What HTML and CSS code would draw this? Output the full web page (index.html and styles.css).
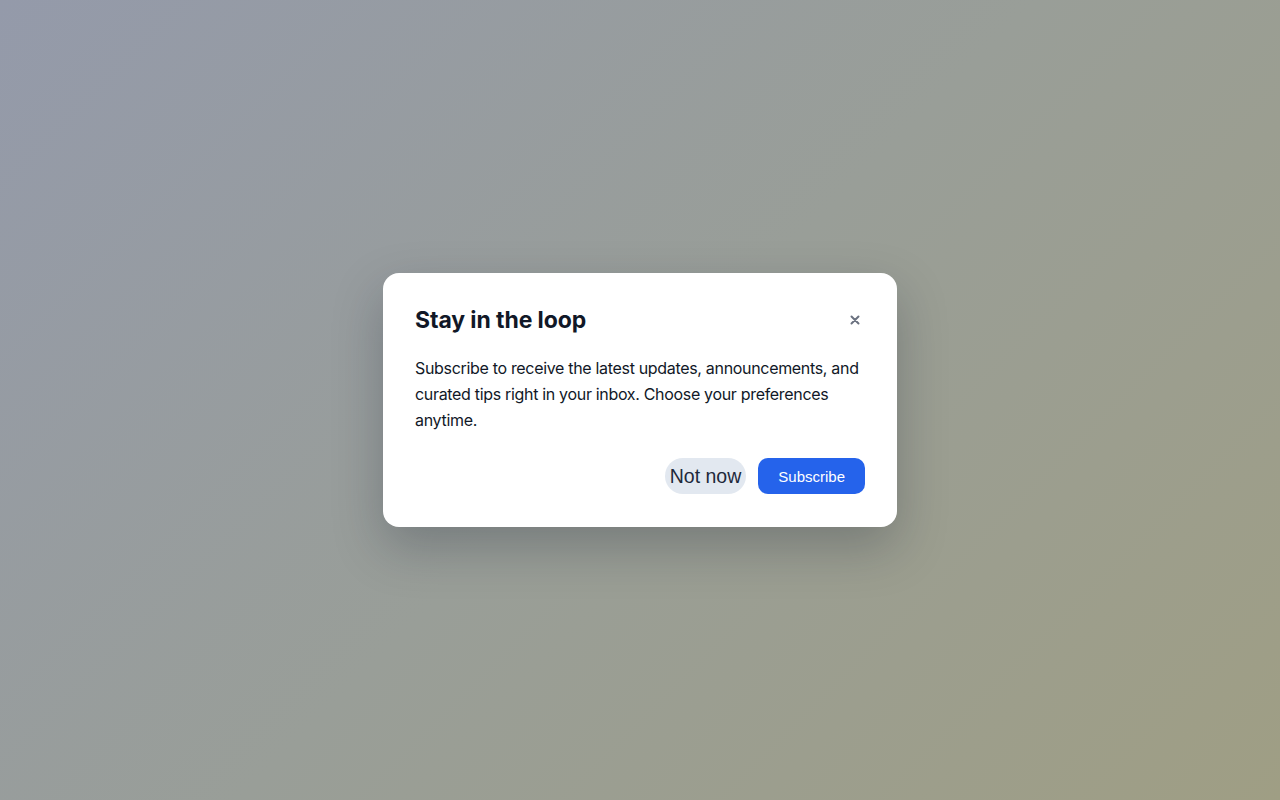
FILE: index.html
```html
<!DOCTYPE html>
<html lang="en">
<head>
  <meta charset="UTF-8" />
  <meta name="viewport" content="width=device-width, initial-scale=1.0"/>
  <title>Stay in the loop</title>
  <link rel="stylesheet" href="styles.css">
</head>
<body>
  <div class="backdrop">
    <div class="dialog" role="dialog" aria-labelledby="dialog-title">
      <div class="dialog-head">
        <h2 id="dialog-title">Stay in the loop</h2>
        <button class="close" aria-label="Close">
          <svg width="10" height="10" viewBox="0 0 10 10"><path d="M1.5 1.5L8.5 8.5M8.5 1.5L1.5 8.5" stroke="#6b7280" stroke-width="2" stroke-linecap="round"/></svg>
        </button>
      </div>
      <p class="dialog-text">Subscribe to receive the latest updates, announcements, and curated tips right in your inbox. Choose your preferences anytime.</p>
      <div class="actions">
        <button class="btn-later">Not now</button>
        <button class="btn-subscribe">Subscribe</button>
      </div>
    </div>
  </div>
</body>
</html>
```

FILE: styles.css
```css
html, body {
  margin: 0;
  height: 100%;
}
body {
  font-family: Inter, "Noto Sans", sans-serif;
  color: #111827;
}
.backdrop {
  height: 100%;
  display: flex;
  align-items: center;
  justify-content: center;
  background: linear-gradient(135deg, #949aaa 0%, #999e98 50%, #9f9e84 100%);
}
.dialog {
  width: 450px;
  padding: 32px 32px 33px;
  background: #fff;
  border-radius: 16px;
  box-shadow: 0 20px 50px rgba(15, 23, 42, 0.25);
}
.dialog-head {
  display: flex;
  align-items: center;
  justify-content: space-between;
  height: 30px;
}
.dialog-head h2 {
  margin: 0;
  font-size: 23px;
  font-weight: 700;
  line-height: 30px;
  letter-spacing: -0.1px;
  color: #111827;
}
.close {
  width: 20px;
  height: 20px;
  padding: 0;
  border: none;
  background: none;
  display: flex;
  align-items: center;
  justify-content: center;
  cursor: pointer;
}
.dialog-text {
  margin: 20px 0 0;
  font-size: 16px;
  line-height: 26px;
  letter-spacing: -0.32px;
  color: #111827;
}
.actions {
  margin-top: 25px;
  display: flex;
  justify-content: flex-end;
  gap: 12px;
}
.actions button {
  height: 36px;
  border: none;
  cursor: pointer;
  font-family: "Liberation Sans", Arial, sans-serif;
}
.btn-later {
  padding: 0 5px;
  font-size: 19.5px;
  color: #1e293b;
  background: #e2e8f0;
  border-radius: 999px;
}
.btn-subscribe {
  padding: 0 20px;
  font-size: 15px;
  color: #fff;
  background: #2563eb;
  border-radius: 10px;
}
```
